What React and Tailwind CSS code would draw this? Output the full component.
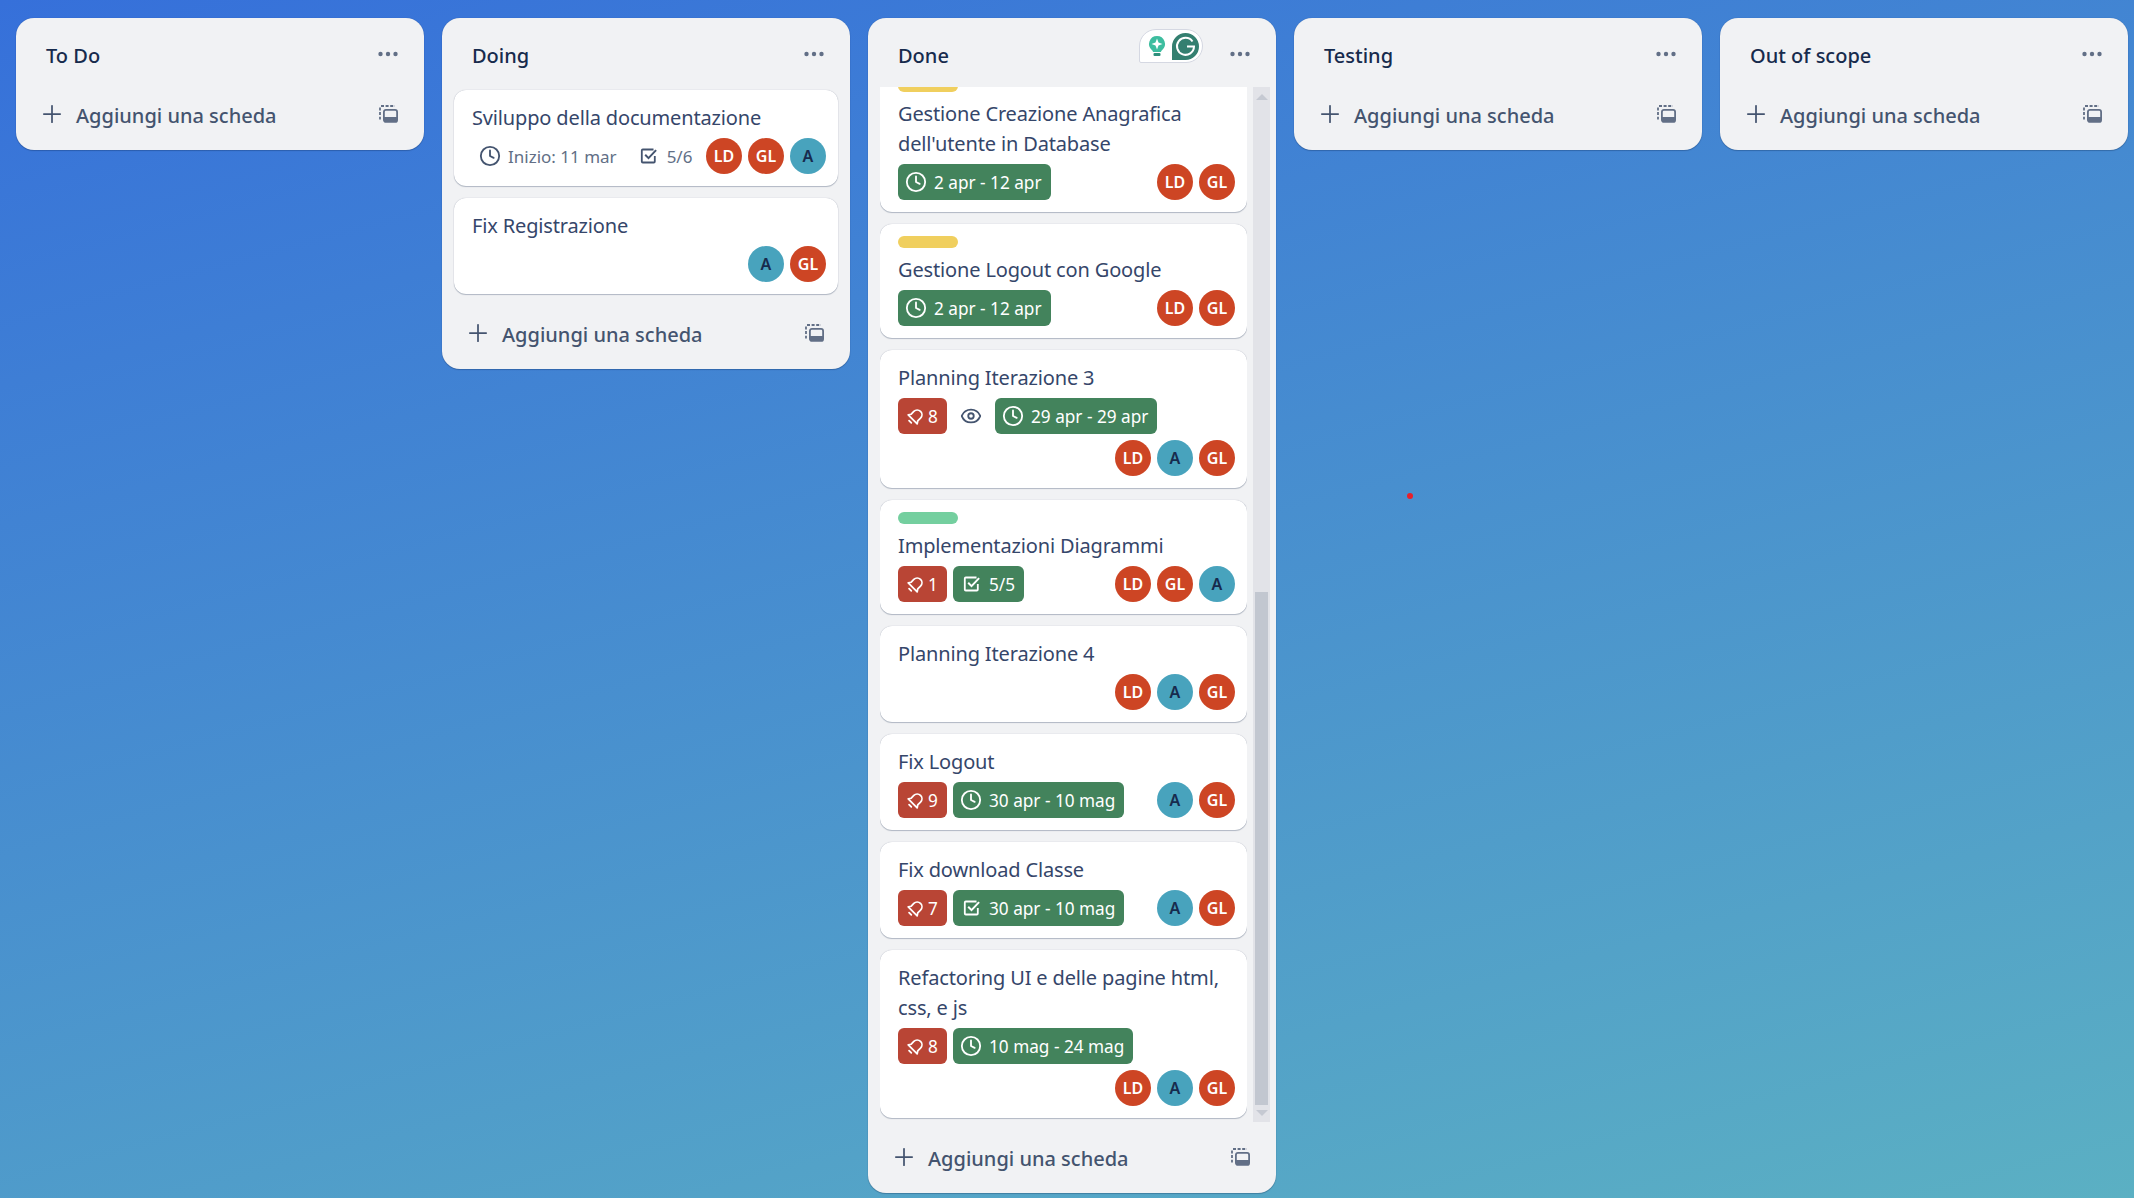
import { Clock, Eye, Plus } from "lucide-react";

const Dots = () => (
  <svg width="20" height="6" viewBox="0 0 20 6" className="text-[#626f86]" fill="currentColor">
    <circle cx="2.5" cy="3" r="2.2" />
    <circle cx="10" cy="3" r="2.2" />
    <circle cx="17.5" cy="3" r="2.2" />
  </svg>
);

const TemplateIcon = () => (
  <svg width="19" height="18" viewBox="0 0 19 18" fill="none" className="text-[#626f86] -mt-[5px]">
    <path d="M2 1h14" stroke="currentColor" strokeWidth="1.8" strokeDasharray="3 1.6" />
    <path d="M1 2.500v12" stroke="currentColor" strokeWidth="1.8" strokeDasharray="3 1.6" />
    <rect x="4.900" y="4.900" width="13.200" height="12" rx="2" stroke="currentColor" strokeWidth="1.800" />
    <path d="M5 12h13v3a2 2 0 0 1-2 2H7a2 2 0 0 1-2-2z" fill="currentColor" />
  </svg>
);

const BellIcon = () => (
  <svg width="19" height="19" viewBox="0 0 24 24" fill="none" stroke="currentColor" strokeWidth="2.200" strokeLinejoin="round" strokeLinecap="round">
    <g transform="rotate(45 12 12)">
      <path d="M4 17h16l-2-3V9a6 6 0 0 0-12 0v5z" />
      <path d="M10 21.500h4" />
    </g>
  </svg>
);

const CheckIcon = ({ className }) => (
  <svg width="18" height="18" viewBox="0 0 18 18" fill="none" stroke="currentColor" strokeWidth="1.800" className={className}>
    <path d="M13.500 2.500H2.800a1 1 0 0 0-1 1v11a1 1 0 0 0 1 1h11a1 1 0 0 0 1-1V9" />
    <path d="M5.200 7.800l3.300 3.300 7.600-8" strokeWidth="2" />
  </svg>
);

const Avatar = ({ who }) => (
  <div
    className={
      who === "A"
        ? "w-9 h-9 rounded-full flex items-center justify-center text-[16px] font-semibold bg-[#48a3bd] text-[#172b4d]"
        : "w-9 h-9 rounded-full flex items-center justify-center text-[16px] font-semibold bg-[#cd4524] text-white"
    }
  >
    {who}
  </div>
);

const Priority = ({ n }) => (
  <div className="h-9 min-w-[49px] rounded-md pl-2 flex items-center gap-[3px] text-[17.2px] text-white bg-[#b94535]">
    <BellIcon />
    <span className="pt-[1px]">{n}</span>
  </div>
);

const Dates = ({ text, check }) => (
  <div className="h-9 rounded-md pl-2 pr-[9px] flex items-center text-[17.2px] text-white bg-[#43835c]">
    {check ? <CheckIcon className="ml-[2px] mr-[8px]" /> : <Clock size={22} strokeWidth={2} className="-ml-[1px] mr-[7px]" />}
    <span className="pt-[1px]">{text}</span>
  </div>
);

const Title = ({ children }) => (
  <div className="text-[20px] tracking-[-0.15px] leading-[30px] text-[#35466a] pt-[1px] mb-[5px]">{children}</div>
);

const Card = ({ title, label, badges, people, stacked }) => (
  <div className="bg-white rounded-xl px-[18px] pt-3 pb-3 shadow-[0_1px_1px_#091e4240,0_0_1px_#091e424f]">
    {label && <div className={`w-[60px] h-3 rounded-md mb-[6px] ${label}`} />}
    <Title>{title}</Title>
    {stacked ? (
      <>
        <div className="flex items-center gap-[6px] mb-[6px]">{badges}</div>
        <div className="flex justify-end gap-[6px] -mr-[6px]">
          {people.map((p) => <Avatar key={p} who={p} />)}
        </div>
      </>
    ) : (
      <div className="flex items-center">
        <div className="flex items-center gap-[6px] flex-1">{badges}</div>
        <div className="flex gap-[6px] -mr-[6px]">
          {people.map((p) => <Avatar key={p} who={p} />)}
        </div>
      </div>
    )}
  </div>
);

const AddRow = () => (
  <div className="h-11 flex items-center pl-[22px] pr-[26px] text-[#44546f]">
    <Plus size={28} strokeWidth={1.5} className="-mt-[4px]" />
    <span className="ml-[10px] flex-1 text-[20px] font-medium">Aggiungi una scheda</span>
    <TemplateIcon />
  </div>
);

const Header = ({ title }) => (
  <div className="h-[69px] flex items-center justify-between pl-[30px] pr-[26px] shrink-0">
    <h2 className="text-[20px] font-medium text-[#172b4d] mt-[6px]">{title}</h2>
    <div className="mt-[3px]"><Dots /></div>
  </div>
);

const Column = ({ title, children, grow }) => (
  <div className={`w-[408px] shrink-0 bg-[#f1f2f4] rounded-[18px] flex flex-col pb-3 shadow-[0_1px_1px_#091e4240,0_0_1px_#091e424f] ${grow ? "h-[1175px]" : ""}`}>
    <Header title={title} />
    {children}
    <div className="pt-[7px]"><AddRow /></div>
  </div>
);

const doneCards = [
  {
    title: "Gestione Creazione Anagrafica dell'utente in Database",
    label: "bg-[#f0cf5e]",
    badges: <Dates text="2 apr - 12 apr" />,
    people: ["LD", "GL"],
  },
  {
    title: "Gestione Logout con Google",
    label: "bg-[#f0cf5e]",
    badges: <Dates text="2 apr - 12 apr" />,
    people: ["LD", "GL"],
  },
  {
    title: "Planning Iterazione 3",
    stacked: true,
    badges: (
      <>
        <Priority n="8" />
        <Eye size={22} strokeWidth={2} className="mx-[7px] text-[#44546f]" />
        <Dates text="29 apr - 29 apr" />
      </>
    ),
    people: ["LD", "A", "GL"],
  },
  {
    title: "Implementazioni Diagrammi",
    label: "bg-[#74cf9f]",
    badges: (
      <>
        <Priority n="1" />
        <Dates check text="5/5" />
      </>
    ),
    people: ["LD", "GL", "A"],
  },
  { title: "Planning Iterazione 4", badges: null, people: ["LD", "A", "GL"] },
  {
    title: "Fix Logout",
    badges: (
      <>
        <Priority n="9" />
        <Dates text="30 apr - 10 mag" />
      </>
    ),
    people: ["A", "GL"],
  },
  {
    title: "Fix download Classe",
    badges: (
      <>
        <Priority n="7" />
        <Dates check text="30 apr - 10 mag" />
      </>
    ),
    people: ["A", "GL"],
  },
  {
    title: "Refactoring UI e delle pagine html, css, e js",
    stacked: true,
    badges: (
      <>
        <Priority n="8" />
        <Dates text="10 mag - 24 mag" />
      </>
    ),
    people: ["LD", "A", "GL"],
  },
];

const GrammarlyWidget = () => (
  <div className="absolute top-[11px] left-[271px] w-[64px] h-[34px] bg-white border border-[#d5d8e2] rounded-[17px] rounded-bl-[2px] flex items-center justify-between pl-[7px] pr-[3px]">
    <svg width="20" height="21" viewBox="0 0 20 21">
      <path d="M10 0a8 8 0 0 1 5 14.200c-.8.700-1 1.300-1 1.800H6c0-.5-.2-1.100-1-1.800A8 8 0 0 1 10 0z" fill="#3dbd9f" />
      <path d="M10 2.500l1.500 4 4 1.500-4 1.500-1.500 4-1.500-4-4-1.500 4-1.500z" fill="#fff" />
      <rect x="6.500" y="17" width="7" height="3" rx="1" fill="#2f8f7c" />
    </svg>
    <svg width="27" height="27" viewBox="0 0 27 27">
      <path d="M13.500 0a13.500 13.500 0 0 1 0 27H0V13.500A13.500 13.500 0 0 1 13.500 0z" fill="#347f70" />
      <path d="M20.500 8.500a8.500 8.500 0 1 0 1.500 5h-7" fill="none" stroke="#fff" strokeWidth="2" />
    </svg>
  </div>
);

export default function App() {
  return (
    <div className="relative h-[1198px] overflow-hidden bg-[linear-gradient(165deg,#3670da_0%,#5bb0c3_100%)] font-['Noto_Sans',sans-serif]">
      <div className="flex items-start gap-[18px] pl-4 pt-[18px]">
        <Column title="To Do" />
        <Column title="Doing">
          <div className="px-3 pt-[3px] pb-3 flex flex-col gap-3">
            <div className="bg-white rounded-xl pl-[18px] pr-3 pt-3 pb-3 shadow-[0_1px_1px_#091e4240,0_0_1px_#091e424f]">
              <Title>Sviluppo della documentazione</Title>
              <div className="flex items-center text-[17px] text-[#626f86]">
                <Clock size={22} strokeWidth={2} className="ml-[7px] text-[#44546f]" />
                <span className="ml-[7px] pt-[1px]">Inizio: 11 mar</span>
                <CheckIcon className="ml-[23px] text-[#44546f]" />
                <span className="ml-[9px] flex-1 pt-[1px]">5/6</span>
                <div className="flex gap-[6px]">
                  <Avatar who="LD" />
                  <Avatar who="GL" />
                  <Avatar who="A" />
                </div>
              </div>
            </div>
            <Card title="Fix Registrazione" badges={null} people={["A", "GL"]} />
          </div>
        </Column>
        <div className="relative">
          <Column title="Done" grow>
            <div className="flex-1 min-h-0 flex gap-[6px] pl-3 pr-[6px] mb-[8px]">
              <div className="flex-1 min-w-0 overflow-hidden">
                <div className="-mt-[19px] flex flex-col gap-3">
                  {doneCards.map((c) => <Card key={c.title} {...c} />)}
                </div>
              </div>
              <div className="w-[17px] shrink-0 bg-[#e2e3e8] flex flex-col items-center justify-between pb-[17px] relative">
                <div className="mt-[7px] w-0 h-0 border-x-[6px] border-x-transparent border-b-[6px] border-b-[#c5c9d2]" />
                <div className="w-[13px] h-[513px] bg-[#c2c7d0]" />
                <div className="absolute bottom-[6px] w-0 h-0 border-x-[6px] border-x-transparent border-t-[6px] border-t-[#c5c9d2]" />
              </div>
            </div>
          </Column>
          <GrammarlyWidget />
        </div>
        <Column title="Testing" />
        <Column title="Out of scope" />
      </div>
      <div className="absolute left-[1407px] top-[493px] w-[6px] h-[6px] rounded-full bg-[#e8202a]" />
    </div>
  );
}
